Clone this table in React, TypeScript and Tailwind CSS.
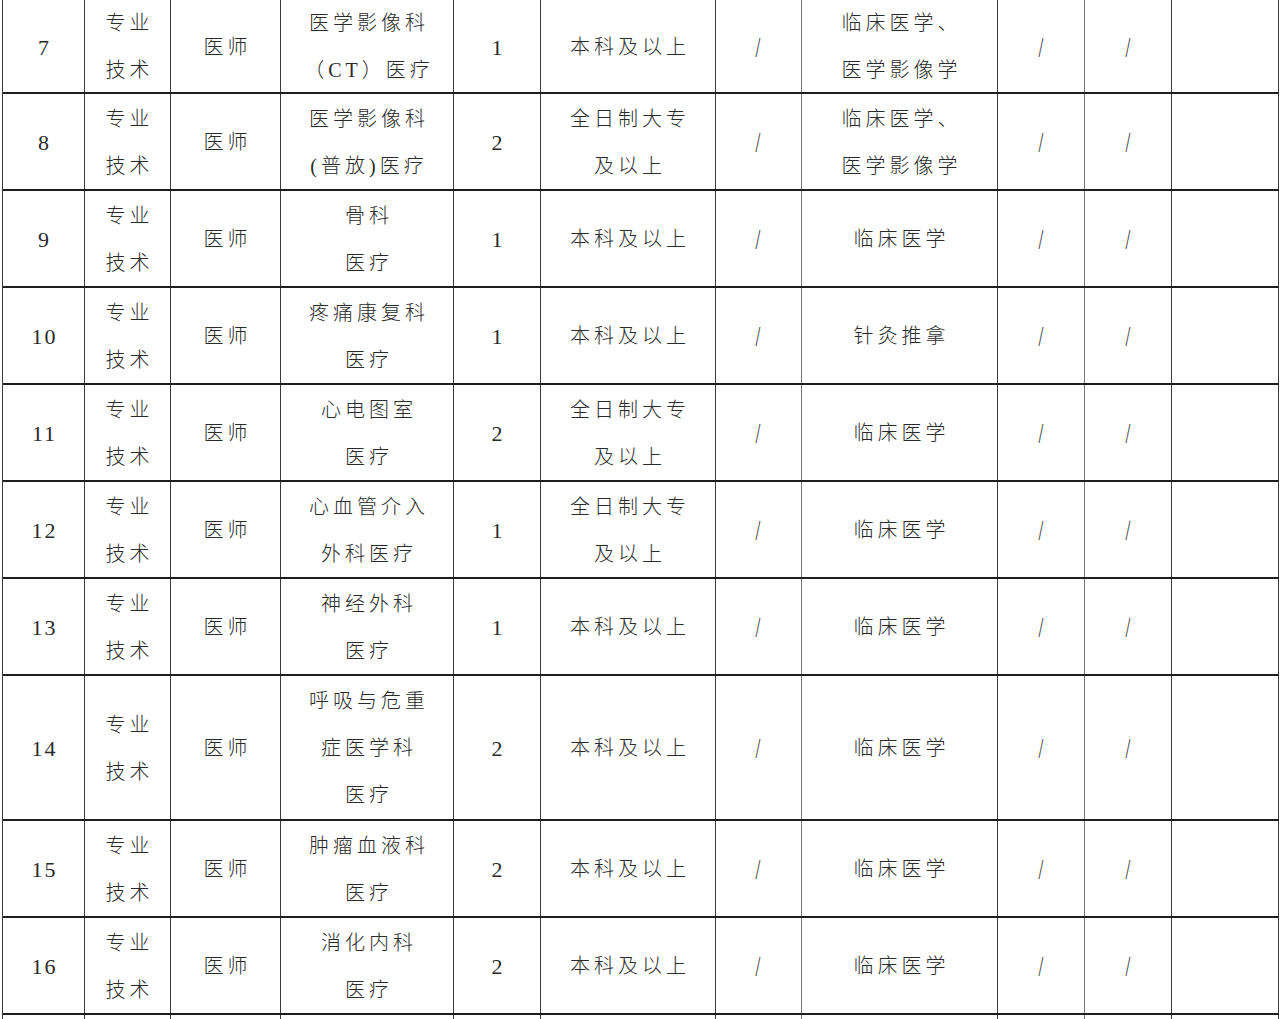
import React from 'react'

type Row = {
  no: string
  dept: string[]
  qty: string
  edu: string[]
  major: string[]
  h?: string
}

const rows: Row[] = [
  { no: '7', dept: ['医学影像科', '（CT）医疗'], qty: '1', edu: ['本科及以上'], major: ['临床医学、', '医学影像学'], h: 'h-[94px]' },
  { no: '8', dept: ['医学影像科', '(普放)医疗'], qty: '2', edu: ['全日制大专', '及以上'], major: ['临床医学、', '医学影像学'] },
  { no: '9', dept: ['骨科', '医疗'], qty: '1', edu: ['本科及以上'], major: ['临床医学'] },
  { no: '10', dept: ['疼痛康复科', '医疗'], qty: '1', edu: ['本科及以上'], major: ['针灸推拿'] },
  { no: '11', dept: ['心电图室', '医疗'], qty: '2', edu: ['全日制大专', '及以上'], major: ['临床医学'] },
  { no: '12', dept: ['心血管介入', '外科医疗'], qty: '1', edu: ['全日制大专', '及以上'], major: ['临床医学'] },
  { no: '13', dept: ['神经外科', '医疗'], qty: '1', edu: ['本科及以上'], major: ['临床医学'] },
  { no: '14', dept: ['呼吸与危重', '症医学科', '医疗'], qty: '2', edu: ['本科及以上'], major: ['临床医学'], h: 'h-[145px]' },
  { no: '15', dept: ['肿瘤血液科', '医疗'], qty: '2', edu: ['本科及以上'], major: ['临床医学'] },
  { no: '16', dept: ['消化内科', '医疗'], qty: '2', edu: ['本科及以上'], major: ['临床医学'] }
]

const cell = 'flex flex-col items-center justify-center pt-[2px] border-r border-[#3a3a3a] shrink-0'

function Lines({ items }: { items: string[] }) {
  return (
    <>
      {items.map((t) => (
        <span key={t} className="block leading-[47px] tracking-[4px] pl-[4px] whitespace-nowrap">
          {t}
        </span>
      ))}
    </>
  )
}

function Slash() {
  return <span className="text-[29px] leading-none text-[#333] scale-x-[0.6] inline-block">/</span>
}

export default function App() {
  return (
    <div
      className="w-[1280px] h-[1019px] overflow-hidden bg-white text-[20px] text-[#2a2a2a] font-light"
      style={{ fontFamily: '"Liberation Serif", "Noto Sans CJK SC", serif' }}
    >
      <div className="ml-[2px] w-[1277px] border-l border-[#3a3a3a]">
        {[...rows, { no: '', dept: [], qty: '', edu: [], major: [] } as Row].map((r, i) => (
          <div
            key={i}
            className={`flex border-b-2 border-[#1e1e1e] ${r.h ?? 'h-[97px]'}`}
          >
            <div className={`${cell} w-[82px]`}>
              <span className="text-[22px] tracking-[2px] pl-[2px]">{r.no}</span>
            </div>
            <div className={`${cell} w-[86px]`}>
              {r.no && <Lines items={['专业', '技术']} />}
            </div>
            <div className={`${cell} w-[110px]`}>
              {r.no && <Lines items={['医师']} />}
            </div>
            <div className={`${cell} w-[173px]`}>
              <Lines items={r.dept} />
            </div>
            <div className={`${cell} w-[87px]`}>
              <span className="text-[22px]">{r.qty}</span>
            </div>
            <div className={`${cell} w-[175px]`}>
              <Lines items={r.edu} />
            </div>
            <div className={`${cell} w-[86px] border-[#777]`}>{r.no && <Slash />}</div>
            <div className={`${cell} w-[196px]`}>
              <Lines items={r.major} />
            </div>
            <div className={`${cell} w-[87px] border-[#777]`}>{r.no && <Slash />}</div>
            <div className={`${cell} w-[87px]`}>{r.no && <Slash />}</div>
            <div className={`${cell} w-[107px]`} />
          </div>
        ))}
      </div>
    </div>
  )
}
